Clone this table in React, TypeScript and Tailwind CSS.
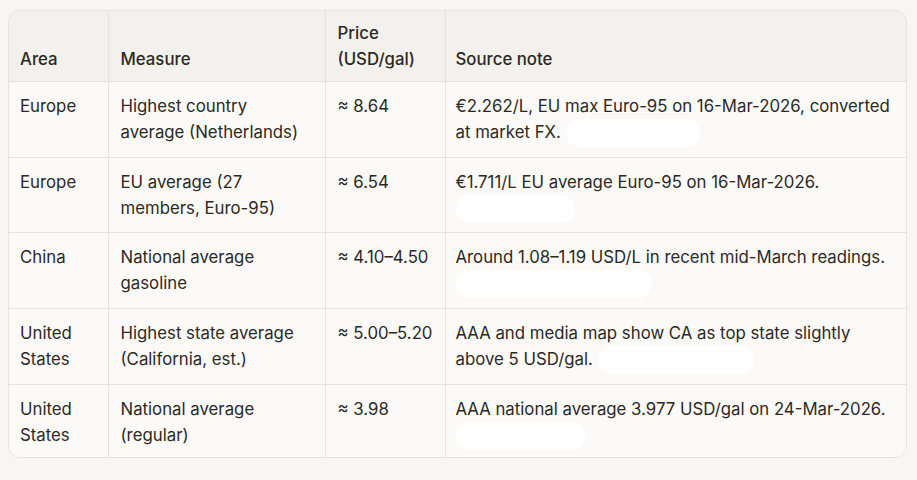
import React from 'react';

interface Row {
  area: string;
  measure: string;
  price: string;
  note: string;
  chip: number;
  h: string;
}

const rows: Row[] = [
  { area: 'Europe', measure: 'Highest country average (Netherlands)', price: '≈ 8.64', note: '€2.262/L, EU max Euro-95 on 16-Mar-2026, converted at market FX.', chip: 134, h: 'h-[76px]' },
  { area: 'Europe', measure: 'EU average (27 members, Euro-95)', price: '≈ 6.54', note: '€1.711/L EU average Euro-95 on 16-Mar-2026.', chip: 118, h: 'h-[75px]' },
  { area: 'China', measure: 'National average gasoline', price: '≈ 4.10–4.50', note: 'Around 1.08–1.19 USD/L in recent mid-March readings.', chip: 196, h: 'h-[76px]' },
  { area: 'United States', measure: 'Highest state average (California, est.)', price: '≈ 5.00–5.20', note: 'AAA and media map show CA as top state slightly above 5 USD/gal.', chip: 156, h: 'h-[76px]' },
  { area: 'United States', measure: 'National average (regular)', price: '≈ 3.98', note: 'AAA national average 3.977 USD/gal on 24-Mar-2026.', chip: 130, h: 'h-[73px]' },
];

export default function App() {
  return (
    <div className="min-h-[480px] w-[917px] bg-[#f7f6f3] pl-2 pt-[10px] font-['Inter',sans-serif] text-[16.8px] leading-[26px] text-[#2b2924]">
      <div className="w-[899px] overflow-hidden rounded-xl border border-[#e6e3de]">
        <table className="w-full table-fixed border-collapse">
          <colgroup>
            <col className="w-[99px]" />
            <col className="w-[217px]" />
            <col className="w-[120px]" />
            <col />
          </colgroup>
          <thead className="bg-[#f3f1ed]">
            <tr className="h-[70px]">
              <th className="px-[11px] pb-[9px] text-left align-bottom font-medium">Area</th>
              <th className="border-l border-[#e6e3de] px-3 pb-[9px] text-left align-bottom font-medium">Measure</th>
              <th className="border-l border-[#e6e3de] px-3 pb-[9px] text-left align-bottom font-medium">Price (USD/gal)</th>
              <th className="border-l border-[#e6e3de] px-[10px] pb-[9px] text-left align-bottom font-medium">Source note</th>
            </tr>
          </thead>
          <tbody className="bg-[#fbfaf8]">
            {rows.map((r, i) => (
              <tr key={i} className={`border-t border-[#e6e3de] ${r.h}`}>
                <td className="px-[11px] pt-[11px] pb-[9px] align-top">{r.area}</td>
                <td className="border-l border-[#e6e3de] px-3 pt-[11px] pb-[9px] align-top">{r.measure}</td>
                <td className="border-l border-[#e6e3de] px-3 pt-[11px] pb-[9px] align-top">{r.price}</td>
                <td className="border-l border-[#e6e3de] px-[10px] pt-[11px] pb-[9px] align-top">
                  {r.note}{' '}
                  <span
                    className="-my-1 inline-block h-[28px] rounded-full bg-white align-middle"
                    style={{ width: r.chip }}
                  />
                </td>
              </tr>
            ))}
          </tbody>
        </table>
      </div>
    </div>
  );
}
